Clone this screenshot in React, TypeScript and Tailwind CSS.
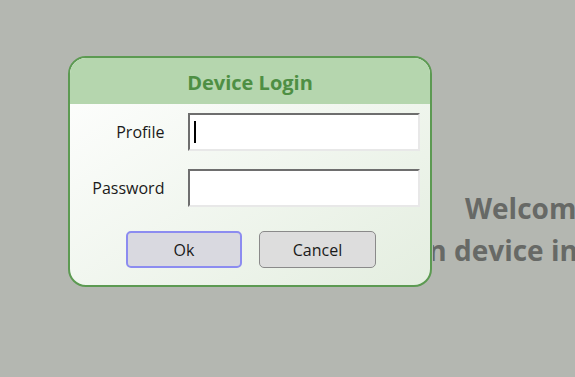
// Device login dialog over a gray welcome screen

export default function App() {
    return (
        <div className="relative w-[575px] h-[377px] overflow-hidden bg-[#b4b7b1] font-['Open_Sans',sans-serif]">

            {/* Welcome text behind the dialog, only the part right of the dialog shows */}
            <div className="ml-[433px] w-[142px] overflow-hidden flex flex-col pt-[187px] text-[#676966] font-bold text-[28px] leading-[42px] whitespace-nowrap">
                <div className="ml-[32px]">Welcome</div>
                <div className="ml-[-170px]">Select a login device in the list</div>
            </div>

            {/* Dialog */}
            <div className="absolute left-[68px] top-[56px] w-[364px] h-[231px] rounded-[18px] border-2 border-[#5c9a52] overflow-hidden flex flex-col bg-gradient-to-br from-white to-[#e4eee0]">

                {/* Header */}
                <div className="h-[46px] bg-[#b5d6ae] flex items-center justify-center pt-[3px]">
                    <span className="text-[20px] font-bold text-[#4e8f44]">Device Login</span>
                </div>

                {/* Fields */}
                <div className="flex flex-col gap-[18px] pt-[9px] pl-[10px] pr-[10px]">
                    <div className="flex flex-row items-center">
                        <label className="w-[85px] text-right text-[16px] text-[#1a1a1a]">Profile</label>
                        <div className="ml-[24px] w-[233px] h-[38px] bg-white border-2 border-t-[#6e6e6e] border-l-[#6e6e6e] border-r-[#e8e8e8] border-b-[#e8e8e8] flex items-center pl-[4px]">
                            <div className="w-[2px] h-[22px] bg-black"></div>
                        </div>
                    </div>
                    <div className="flex flex-row items-center">
                        <label className="w-[85px] text-right text-[16px] text-[#1a1a1a]">Password</label>
                        <div className="ml-[24px] w-[233px] h-[38px] bg-white border-2 border-t-[#6e6e6e] border-l-[#6e6e6e] border-r-[#e8e8e8] border-b-[#e8e8e8]"></div>
                    </div>
                </div>

                {/* Buttons */}
                <div className="flex flex-row gap-[17px] pl-[56px] pt-[24px]">
                    <button className="w-[116px] h-[37px] rounded-[5px] border-2 border-[#8c8cf0] bg-[#d9d9e0] text-[16px] text-[#1a1a1a]">Ok</button>
                    <button className="w-[117px] h-[37px] rounded-[5px] border border-[#8a8a8a] bg-[#dddddd] text-[16px] text-[#1a1a1a]">Cancel</button>
                </div>

            </div>
        </div>
    )
}
